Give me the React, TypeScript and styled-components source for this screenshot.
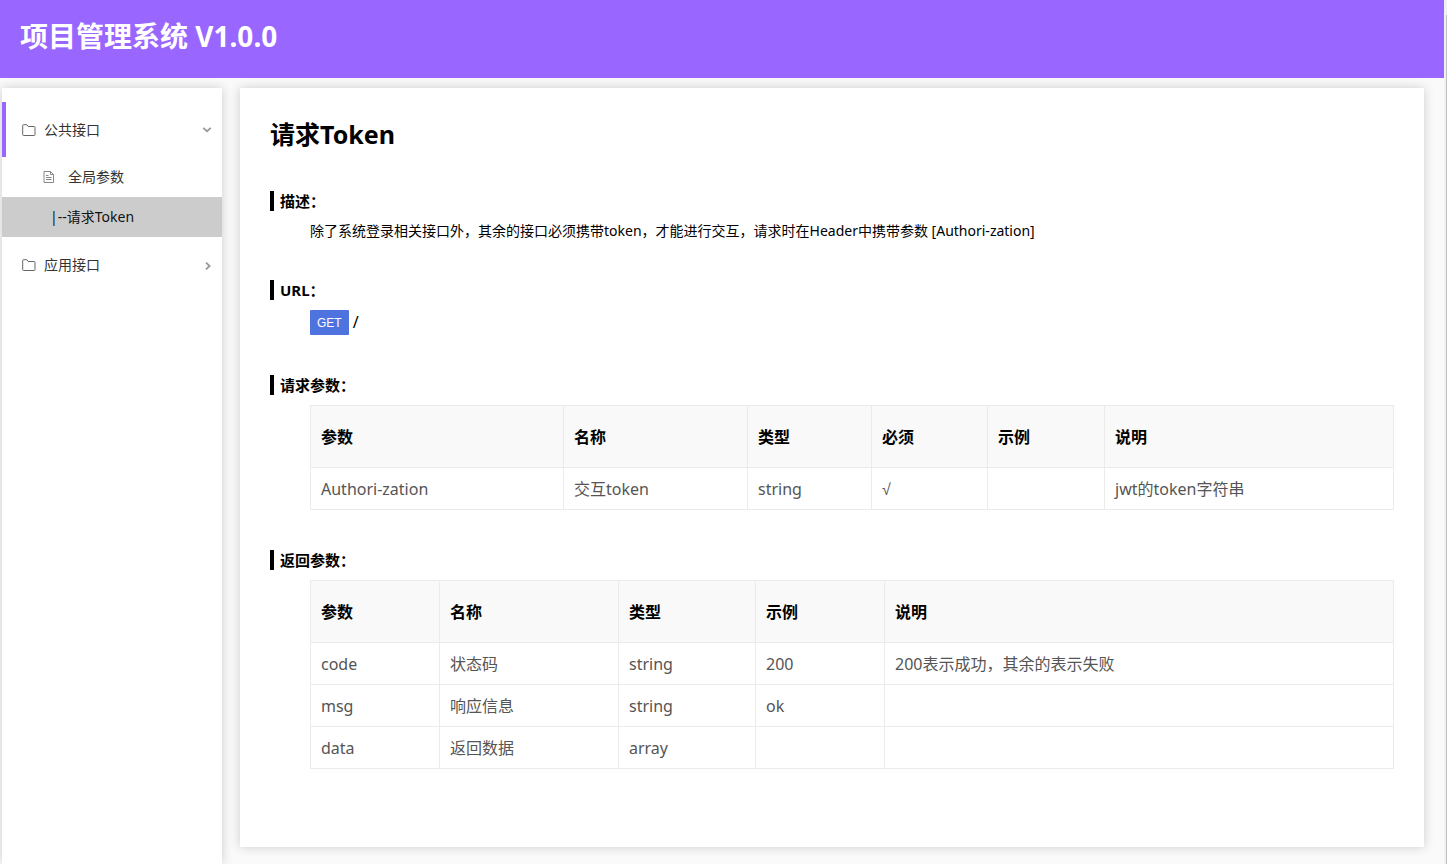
import React from "react";
import styled, { createGlobalStyle } from "styled-components";

const GlobalStyle = createGlobalStyle`
  * { box-sizing: border-box; }
  body {
    margin: 0;
    background: #fafafa;
    color: #000;
    font-family: "Noto Sans", "Noto Sans CJK SC", sans-serif;
    font-size: 14px;
    line-height: 20px;
  }
`;

const Shell = styled.div`
  display: grid;
  grid-template-columns: minmax(0, 1fr) 3px;
  min-height: 100vh;
`;

const Page = styled.div`
  display: flex;
  flex-direction: column;
`;

const ScrollTrack = styled.div`
  display: flex;
  padding: 15px 0 0 2px;
  background: #f1f1f1;
`;

const ScrollThumb = styled.div`
  flex: 1;
  background: #c1c1c1;
`;

const Header = styled.header`
  height: 78px;
  padding: 16px 20px;
  background: #9966ff;
  color: #fff;
`;

const SystemName = styled.h1`
  margin: 0;
  font-size: 28px;
  line-height: 40px;
  font-weight: 700;
`;

const Body = styled.div`
  flex: 1;
  display: flex;
  gap: 18px;
  padding: 10px 20px 0 2px;
  overflow: hidden;
`;

const Sidebar = styled.nav`
  flex: 0 0 220px;
  padding-top: 14px;
  background: #fff;
  box-shadow: 0 0 10px #ccc;
`;

const MenuList = styled.ul`
  margin: 0;
  padding: 0;
  list-style: none;
`;

const GroupButton = styled.button<{ $open?: boolean }>`
  display: flex;
  align-items: center;
  gap: 8px;
  width: 100%;
  height: 55px;
  padding: 0 10px 0 16px;
  border: 0;
  border-left: 4px solid ${(p) => (p.$open ? "#9966ff" : "transparent")};
  background: none;
  color: #333;
  font: inherit;
  text-align: left;
  cursor: pointer;
`;

const GroupName = styled.span`
  flex: 1;
`;

const ItemLink = styled.a<{ $active?: boolean }>`
  display: flex;
  align-items: center;
  gap: 12px;
  height: 40px;
  padding-left: ${(p) => (p.$active ? 48 : 40)}px;
  background: ${(p) => (p.$active ? "#ccc" : "transparent")};
  color: ${(p) => (p.$active ? "#111" : "#333")};
  text-decoration: none;
`;

const Card = styled.main`
  flex: 1;
  min-width: 0;
  align-self: flex-start;
  margin-bottom: 17px;
  padding: 29px 30px 38px;
  background: #fff;
  box-shadow: 0 0 10px #ccc;
`;

const Title = styled.h2`
  margin: 0 0 40px;
  font-size: 25px;
  line-height: 34px;
  font-weight: 700;
`;

const SectionBox = styled.section`
  margin-bottom: 40px;
`;

const SectionTitle = styled.h3`
  margin: 0 0 10px;
  padding-left: 6px;
  border-left: 4px solid #000;
  font-size: 15px;
  line-height: 20px;
  font-weight: 700;
`;

const SectionContent = styled.div`
  margin-left: 40px;
`;

const Description = styled.p`
  margin: 0;
  line-height: 19px;
`;

const UrlRow = styled.div`
  display: flex;
  align-items: flex-start;
  gap: 4px;
`;

const Method = styled.button`
  height: 25px;
  padding: 0 7px;
  border: 0;
  border-radius: 1px;
  background: #4e73df;
  color: #fff;
  font: 12px/24px "Liberation Sans", sans-serif;
`;

const Path = styled.span`
  font-size: 16px;
  line-height: 24px;
`;

const Table = styled.table`
  width: 100%;
  table-layout: fixed;
  border-collapse: collapse;
  font-size: 16px;
  line-height: 21px;
  text-align: left;

  th,
  td {
    padding: 11px 10px 9px;
    border: 1px solid #ebebeb;
  }
  th {
    height: 62px;
    background: #f9f9f9;
    font-weight: 700;
  }
  td {
    height: 42px;
    color: #555;
  }
`;

const Tick = styled.span`
  font-family: "Liberation Sans", sans-serif;
`;

const FolderIcon = () => (
  <svg width="14" height="14" viewBox="0 0 14 14" fill="none" stroke="#666" aria-hidden="true">
    <path d="M1.5 12.5q-.8 0-.8-.8V2.5q0-.8.8-.8h3.3l1.4 1.8h6q.8 0 .8.8v7.4q0 .8-.8.8z" />
  </svg>
);

const FileIcon = () => (
  <svg width="14" height="14" viewBox="0 0 14 14" fill="none" stroke="#888" aria-hidden="true">
    <path d="M2 1.5h6.5l3 3v8H2zM8.5 1.5v3h3M4 5.5h2.5M4 7.5h5.5M4 9.5h5.5" />
  </svg>
);

const Chevron = ({ open }: { open?: boolean }) => (
  <svg width="10" height="10" viewBox="0 0 10 10" fill="none" stroke="#999" strokeWidth="1.8" aria-hidden="true">
    <path d={open ? "M1.2 2.8L5 6.2l3.8-3.4" : "M4 2.6L7.6 6 4 9.4"} />
  </svg>
);

type Column = { name: string; width?: number };

const requestColumns: Column[] = [
  { name: "参数", width: 253 },
  { name: "名称", width: 184 },
  { name: "类型", width: 124 },
  { name: "必须", width: 116 },
  { name: "示例", width: 117 },
  { name: "说明" },
];
const requestRows = [["Authori-zation", "交互token", "string", "√", "", "jwt的token字符串"]];

const responseColumns: Column[] = [
  { name: "参数", width: 129 },
  { name: "名称", width: 179 },
  { name: "类型", width: 137 },
  { name: "示例", width: 129 },
  { name: "说明" },
];
const responseRows = [
  ["code", "状态码", "string", "200", "200表示成功，其余的表示失败"],
  ["msg", "响应信息", "string", "ok", ""],
  ["data", "返回数据", "array", "", ""],
];

const ParamTable = ({ columns, rows }: { columns: Column[]; rows: string[][] }) => (
  <Table>
    <colgroup>
      {columns.map((c) => (
        <col key={c.name} width={c.width} />
      ))}
    </colgroup>
    <thead>
      <tr>
        {columns.map((c) => (
          <th key={c.name} scope="col">{c.name}</th>
        ))}
      </tr>
    </thead>
    <tbody>
      {rows.map((row) => (
        <tr key={row[0]}>
          {row.map((cell, i) => (
            <td key={i}>{cell === "√" ? <Tick>{cell}</Tick> : cell}</td>
          ))}
        </tr>
      ))}
    </tbody>
  </Table>
);

const Section = ({ title, children }: { title: string; children: React.ReactNode }) => (
  <SectionBox>
    <SectionTitle>{title}</SectionTitle>
    <SectionContent>{children}</SectionContent>
  </SectionBox>
);

export default function App() {
  return (
    <Shell lang="zh-CN">
      <GlobalStyle />
      <Page>
        <Header>
          <SystemName>项目管理系统 V1.0.0</SystemName>
        </Header>
        <Body>
          <Sidebar>
            <MenuList>
              <li>
                <GroupButton $open aria-expanded="true">
                  <FolderIcon />
                  <GroupName>公共接口</GroupName>
                  <Chevron open />
                </GroupButton>
                <MenuList>
                  <li>
                    <ItemLink href="#global">
                      <FileIcon />
                      全局参数
                    </ItemLink>
                  </li>
                  <li>
                    <ItemLink href="#token" $active aria-current="page">|--请求Token</ItemLink>
                  </li>
                </MenuList>
              </li>
              <li>
                <GroupButton aria-expanded="false">
                  <FolderIcon />
                  <GroupName>应用接口</GroupName>
                  <Chevron />
                </GroupButton>
              </li>
            </MenuList>
          </Sidebar>
          <Card>
            <Title>请求Token</Title>
            <Section title="描述：">
              <Description>
                除了系统登录相关接口外，其余的接口必须携带token，才能进行交互，请求时在Header中携带参数 [Authori-zation]
              </Description>
            </Section>
            <Section title="URL：">
              <UrlRow>
                <Method>GET</Method>
                <Path>/</Path>
              </UrlRow>
            </Section>
            <Section title="请求参数：">
              <ParamTable columns={requestColumns} rows={requestRows} />
            </Section>
            <Section title="返回参数：">
              <ParamTable columns={responseColumns} rows={responseRows} />
            </Section>
          </Card>
        </Body>
      </Page>
      <ScrollTrack>
        <ScrollThumb />
      </ScrollTrack>
    </Shell>
  );
}
